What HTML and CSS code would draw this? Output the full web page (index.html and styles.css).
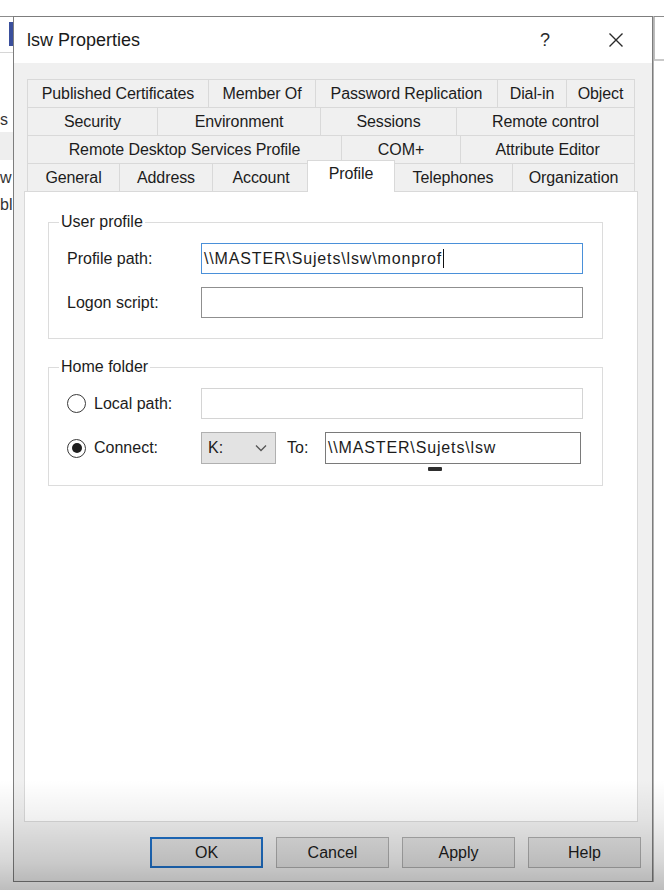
FILE: index.html
```html
<!DOCTYPE html>
<html lang="en">
<head>
<meta charset="utf-8">
<title>lsw Properties</title>
<link rel="stylesheet" href="styles.css">
</head>
<body>
<div class="desktop">
  <div class="bgwin bgwin-left">
    <div class="bl-top"></div>
    <div class="bl-head"><div class="bl-accent"></div></div>
    <div class="bl-line bl-s">s</div>
    <div class="bl-band"></div>
    <div class="bl-line bl-w">w</div>
    <div class="bl-line bl-b">bl</div>
  </div>
  <div class="bgwin bgwin-right">
    <div class="br-top"></div>
    <div class="br-head"></div>
  </div>

  <div class="dialog">
    <div class="titlebar">
      <span class="title">lsw Properties</span>
      <span class="tb-help">?</span>
      <span class="tb-close">
        <svg width="16" height="16" viewBox="0 0 16 16"><path d="M1.5 1.5 L14.5 14.5 M14.5 1.5 L1.5 14.5" stroke="#2a2a2a" stroke-width="1.4" fill="none"/></svg>
      </span>
    </div>
    <div class="body">
      <div class="tabs">
        <div class="tabrow r1">
          <div class="tab">Published Certificates</div>
          <div class="tab">Member Of</div>
          <div class="tab">Password Replication</div>
          <div class="tab">Dial-in</div>
          <div class="tab">Object</div>
        </div>
        <div class="tabrow r2">
          <div class="tab">Security</div>
          <div class="tab">Environment</div>
          <div class="tab">Sessions</div>
          <div class="tab">Remote control</div>
        </div>
        <div class="tabrow r3">
          <div class="tab">Remote Desktop Services Profile</div>
          <div class="tab">COM+</div>
          <div class="tab">Attribute Editor</div>
        </div>
        <div class="tabrow r4">
          <div class="tab">General</div>
          <div class="tab">Address</div>
          <div class="tab">Account</div>
          <div class="tab active">Profile</div>
          <div class="tab">Telephones</div>
          <div class="tab">Organization</div>
        </div>
      </div>

      <div class="panel">
        <fieldset class="group">
          <legend>User profile</legend>
          <div class="frow">
            <span class="lbl">Profile path:</span>
            <div class="input focus">\\MASTER\Sujets\lsw\monprof<span class="caret"></span></div>
          </div>
          <div class="frow">
            <span class="lbl">Logon script:</span>
            <div class="input"></div>
          </div>
        </fieldset>

        <fieldset class="group home">
          <legend>Home folder</legend>
          <div class="frow">
            <span class="lbl radio-lbl"><span class="radio"></span>Local path:</span>
            <div class="input disabled"></div>
          </div>
          <div class="frow">
            <span class="lbl radio-lbl"><span class="radio checked"></span>Connect:</span>
            <div class="connect">
              <div class="combo">K:<svg class="chev" width="12" height="8" viewBox="0 0 12 8"><path d="M1 1.5 L6 6.5 L11 1.5" stroke="#555" stroke-width="1.3" fill="none"/></svg></div>
              <span class="to">To:</span>
              <div class="input to-input">\\MASTER\Sujets\lsw</div>
            </div>
          </div>
        </fieldset>
      </div>

      <div class="buttons">
        <button class="btn default">OK</button>
        <button class="btn">Cancel</button>
        <button class="btn">Apply</button>
        <button class="btn">Help</button>
      </div>
    </div>
  </div>

  <div class="pointer"></div>
  <div class="shade"></div>
</div>
</body>
</html>
```

FILE: styles.css
```css
* { box-sizing: border-box; }

html, body {
  margin: 0;
  padding: 0;
  background: #ffffff;
}

body {
  font-family: "Liberation Sans", Arial, sans-serif;
  font-size: 16px;
  color: #1c1c1c;
}

.desktop {
  position: relative;
  width: 664px;
  height: 890px;
  overflow: hidden;
  background: #ffffff;
}

/* background windows peeking out at the sides */
.bgwin {
  position: absolute;
  top: 0;
  height: 890px;
  background: #fff;
}
.bgwin-left { left: 0; width: 13px; }
.bgwin-right { left: 653px; width: 11px; }

.bl-top { height: 17px; border-bottom: 1px solid #8c8c8c; }
.bl-head {
  height: 36px;
  border-bottom: 1px solid #d6d6d6;
  padding: 5px 0 0 9px;
}
.bl-accent { width: 4px; height: 24px; background: #3a4f9c; }
.bl-line {
  height: 24px;
  line-height: 24px;
  font-size: 16px;
  color: #333;
  white-space: nowrap;
}
.bl-s { margin-top: 55px; }
.bl-band { height: 28px; background: #eeeeee; }
.bl-w { margin-top: 6px; }
.bl-b { margin-top: 3px; }

.br-top { height: 17px; border-bottom: 1px solid #8c8c8c; }
.br-head { height: 44px; border-bottom: 2px solid #c9c9c9; border-left: 2px solid #bdbdbd; }

/* dialog */
.dialog {
  position: absolute;
  left: 13px;
  top: 16px;
  width: 640px;
  height: 866px;
  border: 1px solid #7d7d7d;
  box-shadow: 1px 0 0 #b4b4b4;
  background: #f0f0f0;
  display: flex;
  flex-direction: column;
}

.titlebar {
  height: 46px;
  background: #ffffff;
  display: flex;
  align-items: center;
  padding: 0 21px 0 13px;
}
.title {
  flex: 1;
  font-size: 18px;
  color: #1a1a1a;
}
.tb-help {
  width: 20px;
  text-align: center;
  font-size: 18px;
  color: #2a2a2a;
}
.tb-close {
  width: 30px;
  margin-left: 46px;
  display: flex;
  justify-content: center;
}

.body {
  flex: 1;
  padding: 16px 14px 0 10px;
  display: flex;
  flex-direction: column;
}

/* tabs */
.tabs {
  margin: 0 3px;
  display: flex;
  flex-direction: column;
}
.tabrow {
  display: grid;
  height: 28px;
}
.r1 { grid-template-columns: 181px 107px 182px 69px 69px; }
.r2 { grid-template-columns: 130px 163px 136px 179px; }
.r3 { grid-template-columns: 314px 119px 175px; }
.r4 { grid-template-columns: 92px 93px 97px 84px 119px 123px; }

.tab {
  display: flex;
  align-items: center;
  justify-content: center;
  white-space: nowrap;
  background: #f0f0f0;
  border-top: 1px solid #d9d9d9;
  border-left: 1px solid #d9d9d9;
  color: #1c1c1c;
  letter-spacing: -0.1px;
}
.tab:last-child { border-right: 1px solid #d9d9d9; }
.tab.active {
  position: relative;
  z-index: 1;
  background: #ffffff;
  margin: -3px -2px -1px;
  border-right: 1px solid #d9d9d9;
  padding-bottom: 6px;
}

/* panel */
.panel {
  height: 631px;
  background: #ffffff;
  border: 1px solid #d9d9d9;
  padding: 21px 0 0 23px;
}

.group {
  width: 555px;
  margin: 0;
  border: 1px solid #dcdcdc;
  padding: 12px 19px 20px 18px;
  display: flex;
  flex-direction: column;
  gap: 13px;
}
.group legend {
  padding: 0 2px;
  margin-left: -8px;
  line-height: 18px;
  color: #1c1c1c;
}
.group.home { margin-top: 19px; padding-bottom: 21px; }

.frow {
  display: grid;
  grid-template-columns: 134px 1fr;
  align-items: center;
  height: 31px;
}
.home .frow:last-child { height: 32px; }

.lbl { white-space: nowrap; }
.radio-lbl {
  display: flex;
  align-items: center;
  gap: 8px;
}
.radio {
  width: 19px;
  height: 19px;
  border-radius: 50%;
  border: 1.5px solid #3a3a3a;
  background: #fff;
  display: flex;
  align-items: center;
  justify-content: center;
}
.radio.checked::after {
  content: "";
  width: 10px;
  height: 10px;
  border-radius: 50%;
  background: #1e1e1e;
}

.input {
  height: 100%;
  border: 1px solid #8f8f8f;
  background: #fff;
  padding: 0 2px;
  display: flex;
  align-items: center;
  white-space: nowrap;
  letter-spacing: 0.85px;
  color: #1c1c1c;
}
.input.focus { border: 1px solid #4a90d9; }
.input.disabled { border-color: #d4d4d4; }
.caret {
  display: inline-block;
  width: 1px;
  height: 19px;
  background: #111;
  margin-left: 1px;
}

.connect {
  display: flex;
  align-items: center;
  height: 100%;
}
.combo {
  width: 75px;
  height: 100%;
  background: #e3e3e3;
  border: 1px solid #b0b0b0;
  display: flex;
  align-items: center;
  justify-content: space-between;
  padding: 0 8px 0 6px;
}
.to {
  width: 38px;
  margin-left: 11px;
}
.to-input {
  flex: 1;
  margin-right: 2px;
  border-color: #7a7a7a;
}

/* buttons */
.buttons {
  display: flex;
  justify-content: flex-end;
  gap: 13px;
  margin: 15px -3px 0 0;
}
.btn {
  width: 113px;
  height: 31px;
  font-family: "Liberation Sans", Arial, sans-serif;
  font-size: 16px;
  color: #1c1c1c;
  background: #e1e1e1;
  border: 1px solid #adadad;
  padding: 0;
}
.btn.default { border: 2px solid #1f6fc5; }

/* overlays */
.pointer {
  position: absolute;
  left: 428px;
  top: 467px;
  width: 14px;
  height: 4px;
  background: #2e2e2e;
  border-radius: 1px;
}
.shade {
  position: absolute;
  left: 0;
  right: 0;
  bottom: 0;
  height: 110px;
  pointer-events: none;
  background: linear-gradient(to bottom, rgba(0,0,0,0) 0%, rgba(0,0,0,0.06) 35%, rgba(0,0,0,0.16) 75%, rgba(0,0,0,0.26) 100%);
}
```
